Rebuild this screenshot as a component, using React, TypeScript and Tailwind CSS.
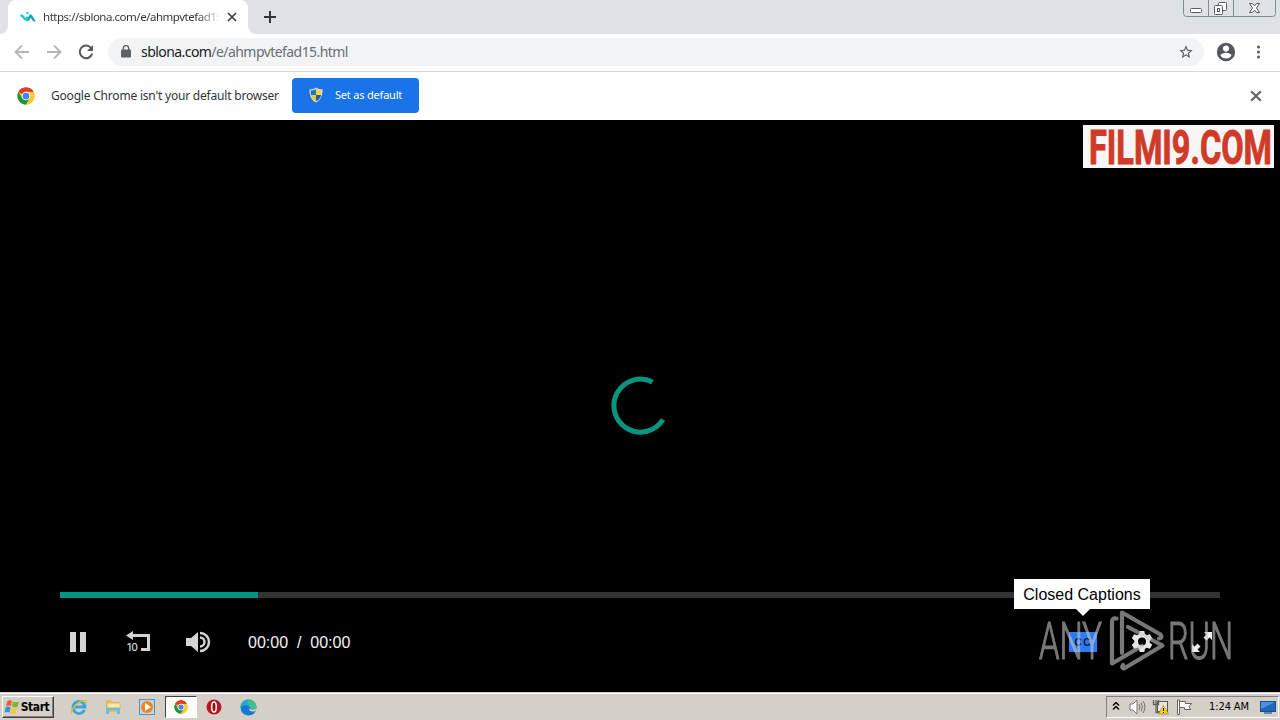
import React, { useState } from 'react'

function SiteIcon() {
  return (
    <svg width="16" height="12" viewBox="0 0 16 12" fill="none" strokeLinecap="round">
      <path d="M1.300 4.500C3.500 4.500 4 9 6.500 9 8 9 8 7.500 7 6.500" stroke="#1fc8d0" strokeWidth="2.400" />
      <path d="M8.500 8.500L10.500 4.500C12 4.500 12 8.500 14.300 9.500" stroke="#18a8a6" strokeWidth="2.400" />
      <circle cx="7.500" cy="2" r="1.200" fill="#22c7ce" />
    </svg>
  )
}

function ChromeLogo({ size }: { size: number }) {
  return (
    <svg width={size} height={size} viewBox="0 0 48 48">
      <circle cx="24" cy="24" r="23" fill="#fbc116" />
      <path d="M24 24L4.100 12.500A23 23 0 0 1 43.900 12.500H24Z" fill="#e33b2e" />
      <path d="M4.100 12.500A23 23 0 0 0 24 47L34 29.700 24 24 14 29.700Z" fill="#229342" />
      <path d="M24 12.500H43.900A23 23 0 0 1 24 47L34 29.700Z" fill="#fcc934" />
      <path d="M4.100 12.500A23 23 0 0 1 43.900 12.500H24A11.500 11.500 0 0 0 14 18.300Z" fill="#e33b2e" />
      <circle cx="24" cy="24" r="11.500" fill="#fff" />
      <circle cx="24" cy="24" r="9" fill="#4285f4" />
    </svg>
  )
}

function ShieldIcon() {
  return (
    <svg width="16" height="16" viewBox="0 0 16 16">
      <path d="M8 .5C10 2 12 2.300 14.500 2.300 14.800 8 13 13 8 15.500 3 13 1.200 8 1.500 2.300 4 2.300 6 2 8 .5Z" fill="#d9dfd5" />
      <path d="M8 2C6.500 3 5 3.400 2.800 3.500V8H8Z" fill="#2675c9" />
      <path d="M8 2C9.500 3 11 3.400 13.200 3.500V8H8Z" fill="#f8d537" />
      <path d="M2.800 8C3.400 11 5 13 8 14.300V8Z" fill="#f5c928" />
      <path d="M13.200 8C12.600 11 11 13 8 14.300V8Z" fill="#1d62b4" />
    </svg>
  )
}

function CloseIcon({ size, color }: { size: number; color: string }) {
  return (
    <svg width={size} height={size} viewBox="0 0 10 10">
      <path d="M1 1L9 9M9 1L1 9" stroke={color} strokeWidth="1.700" />
    </svg>
  )
}

function WindowButtons() {
  return (
    <svg width="94" height="18" viewBox="0 0 94 18" fill="none" className="absolute top-0 right-[3px]">
      <path d="M.5 0V13.500Q.5 16.500 3.500 16.500H89.500Q92.500 16.500 92.500 13.500V0M25.500 0V16M50.500 0V16" stroke="#868b93" />
      <rect x="7.500" y="8.500" width="11" height="4" rx="1" fill="#fff" stroke="#555a63" />
      <rect x="35.500" y="2.500" width="8" height="8" rx="1" fill="#fff" stroke="#555a63" />
      <rect x="31.500" y="5.500" width="8" height="9" rx="1" fill="#fff" stroke="#555a63" />
      <rect x="34.500" y="8.500" width="2" height="3" stroke="#555a63" />
      <path d="M66.500 3.500H69.500L71.500 6 73.500 3.500H76.500L73.500 8 76.500 12.500H73.500L71.500 10 69.500 12.500H66.500L69.500 8Z" fill="#fff" stroke="#555a63" />
    </svg>
  )
}

function TabStrip() {
  return (
    <div className="relative flex h-[34px] bg-[#dee1e6]">
      <div className="relative ml-2 flex w-[240px] items-center rounded-t-lg bg-white pl-3">
        <svg width="8" height="8" className="absolute bottom-0 -left-2"><path d="M8 0V8H0A8 8 0 0 0 8 0Z" fill="#fff" /></svg>
        <svg width="8" height="8" className="absolute -right-2 bottom-0"><path d="M0 0V8H8A8 8 0 0 1 0 0Z" fill="#fff" /></svg>
        <SiteIcon />
        <span className="ml-[7px] w-[175px] bg-gradient-to-r from-[#303338] from-88% to-[#30333833] bg-clip-text text-[11.5px] tracking-[-0.48px] whitespace-nowrap text-transparent">
          https://sblona.com/e/ahmpvtefad15
        </span>
        <button className="ml-[9px]"><CloseIcon size={10} color="#3c4043" /></button>
      </div>
      <button className="ml-[15px]">
        <svg width="14" height="14" viewBox="0 0 14 14"><path d="M7 1V13M1 7H13" stroke="#303338" strokeWidth="2" /></svg>
      </button>
      <WindowButtons />
    </div>
  )
}

function Toolbar() {
  return (
    <div className="flex h-[38px] items-center border-b border-[#d5d7db] bg-white pb-[2px] pl-[14px]">
      <svg width="16" height="16" viewBox="0 0 16 16" fill="none" stroke="#b4b6b9" strokeWidth="1.800">
        <path d="M15 8H2M8 1.500L1.500 8 8 14.500" />
      </svg>
      <svg className="ml-4" width="16" height="16" viewBox="0 0 16 16" fill="none" stroke="#b4b6b9" strokeWidth="1.800">
        <path d="M1 8H14M8 1.500L14.500 8 8 14.500" />
      </svg>
      <svg className="ml-4" width="16" height="16" viewBox="0 0 16 16">
        <path d="M13.300 4.300A6.300 6.300 0 1 0 14.200 9.600" fill="none" stroke="#55585d" strokeWidth="2" />
        <path d="M15 1V7H9Z" fill="#55585d" />
      </svg>
      <div className="ml-[14px] flex h-7 w-[1096px] items-center rounded-full bg-[#f1f3f4] px-[13px]">
        <svg width="10" height="13" viewBox="0 0 10 13">
          <rect x="0" y="4.500" width="10" height="8" rx="1" fill="#5f6368" />
          <path d="M2.300 5V3.300A2.700 2.700 0 0 1 7.700 3.300V5" fill="none" stroke="#5f6368" strokeWidth="1.400" />
        </svg>
        <span className="ml-[10px] text-[14px] tracking-[-0.56px] text-[#6b6f75]">
          <span className="text-[#202124]">sblona.com</span>/e/ahmpvtefad15.html
        </span>
        <svg className="-mr-[3px] ml-auto" width="16" height="16" viewBox="0 0 24 24" fill="#55585d">
          <path d="M22 9.240l-7.190-.62L12 2 9.190 8.630 2 9.240l5.460 4.730L5.820 21 12 17.270 18.180 21l-1.630-7.030L22 9.240zM12 15.400l-3.760 2.270 1-4.280-3.320-2.880 4.380-.38L12 6.100l1.710 4.040 4.380.38-3.320 2.880 1 4.280L12 15.400z" />
        </svg>
      </div>
      <svg className="ml-[11px]" width="22" height="22" viewBox="0 0 24 24" fill="#54575d">
        <path d="M12 2a10 10 0 1 0 0 20 10 10 0 0 0 0-20zm0 3a3.300 3.300 0 1 1 0 6.600A3.300 3.300 0 0 1 12 5zm0 14.200a7.200 7.200 0 0 1-6-3.200c0-2 4-3.100 6-3.100s6 1.100 6 3.100a7.200 7.200 0 0 1-6 3.200z" />
      </svg>
      <svg className="ml-[19px]" width="6" height="16" viewBox="0 0 6 16" fill="#55585d">
        <circle cx="2.500" cy="3" r="1.500" /><circle cx="2.500" cy="8" r="1.500" /><circle cx="2.500" cy="13" r="1.500" />
      </svg>
    </div>
  )
}

function InfoBar() {
  return (
    <div className="flex h-12 items-center bg-white pl-[17px]">
      <ChromeLogo size={18} />
      <span className="ml-4 w-[241px] text-[12px] tracking-[-0.2px] whitespace-nowrap text-[#303338]">
        Google Chrome isn't your default browser
      </span>
      <button className="mb-[2px] flex h-[35px] w-[127px] items-center rounded bg-[#1a73e8] pl-4 text-[11px] tracking-[-0.2px] whitespace-nowrap text-white">
        <ShieldIcon />
        <span className="ml-[11px]">Set as default</span>
      </button>
      <button className="mr-[18px] ml-auto"><CloseIcon size={12} color="#5f6368" /></button>
    </div>
  )
}

function AnyRunMark() {
  return (
    <svg width="200" height="64" viewBox="0 0 200 64" className="pointer-events-none absolute top-[489px] left-[1038px] opacity-60" fontFamily="Roboto, sans-serif" fill="#c8c8c8">
      <g fontSize="52" fontWeight="300" stroke="#c8c8c8" strokeWidth="1.200">
        <text x="1" y="50" textLength="63" lengthAdjust="spacingAndGlyphs">ANY</text>
        <text x="130" y="50" textLength="65" lengthAdjust="spacingAndGlyphs">RUN</text>
      </g>
      <g fill="none" stroke="#c8c8c8" strokeWidth="4.200" strokeLinejoin="round" strokeLinecap="round">
        <path d="M78.500 9.500Q74 8.500 74 13V54.500L104 37" />
        <path d="M84 44V3.500L122.500 25.500Q125 29 121 29.500" />
        <path d="M90 18L124.500 36.500 86 59.500Q83 58.500 85 56" />
      </g>
    </svg>
  )
}

function Player() {
  const [playing, setPlaying] = useState(true)

  return (
    <div className="relative flex h-[572px] flex-col bg-black">
      <div className="absolute top-[5px] left-[1083px] h-[43px] w-[191px] bg-[#f8f6f5]">
        <svg width="191" height="43" fontFamily="Roboto, sans-serif" fill="#d03a28" stroke="#d03a28" strokeWidth="1">
          <text x="6" y="38.500" fontSize="49" fontWeight="700" textLength="183" lengthAdjust="spacingAndGlyphs">FILMI9.COM</text>
        </svg>
      </div>
      <svg width="60" height="60" viewBox="0 0 60 60" className="mt-[256px] ml-[609px]">
        <path d="M43.500 6A26.500 26.500 0 1 0 54 43.500" fill="none" stroke="#0b9580" strokeWidth="5" />
      </svg>
      <div className="mx-[60px] mt-[156px] h-[6px] bg-[#333]">
        <div className="h-full w-[198px] bg-[#009681]" />
      </div>
      <div className="flex h-[88px] items-center pl-[70px]">
        <button onClick={() => setPlaying(!playing)}>
          <svg width="16" height="20" fill="#d4d4d4">
            {playing ? <path d="M0 0H6V20H0ZM10 0H16V20H10Z" /> : <path d="M0 0L16 10L0 20Z" />}
          </svg>
        </button>
        <svg className="ml-10" width="24" height="23" viewBox="0 0 24 23" fill="#d4d4d4">
          <path d="M0 4.500L7 0V3H24V20H15V17H21V6H7V9Z" />
          <text x="1" y="20" fontSize="11" fontWeight="500" fontFamily="Inter, sans-serif" textLength="11" lengthAdjust="spacingAndGlyphs">10</text>
        </svg>
        <svg className="ml-9" width="25" height="22" viewBox="0 0 25 22" fill="#d4d4d4">
          <path d="M0 7H5L12 1V21L5 15H0Z" />
          <path d="M14 2A9 9 0 0 1 14 20M14 6.500A4.500 4.500 0 0 1 14 15.500" fill="none" stroke="#d4d4d4" strokeWidth="2.500" />
        </svg>
        <span className="mt-[2px] ml-[37px] font-['Liberation_Sans',sans-serif] text-[16px] whitespace-pre text-[#f4f4f4]">00:00  /  00:00</span>
        <div className="mr-[68px] ml-auto flex items-center">
          <svg width="28" height="20" viewBox="0 0 28 20">
            <rect width="28" height="20" fill="#2b7cf4" />
            <text x="5.500" y="13.500" fontSize="10" fontWeight="700" fontFamily="Liberation Sans, sans-serif" fill="#061633" textLength="16">CC</text>
          </svg>
          <svg className="ml-[33px]" width="24" height="24" viewBox="0 0 24 24" fill="#e7e7e7">
            <path d="M9.700 1h4.600l.7 3.300 1.700 1 3.200-1 2.300 4-2.500 2.200v2l2.500 2.200-2.300 4-3.200-1-1.700 1-.7 3.300H9.700L9 18.700l-1.700-1-3.200 1-2.300-4 2.500-2.200v-2L1.800 8.300l2.300-4 3.200 1 1.700-1ZM12 7.500a4 4 0 1 0 0 8 4 4 0 0 0 0-8Z" fillRule="evenodd" />
          </svg>
          <svg className="ml-[38px]" width="20" height="20" viewBox="0 0 20 20" fill="#efefef">
            <path d="M12 0H20V8L17.500 5.500 14.500 8.500 11.500 5.500 14.500 2.500ZM0 12L2.500 14.500 5.500 11.500 8.500 14.500 5.500 17.500 8 20H0Z" />
          </svg>
        </div>
      </div>
      <div className="absolute top-[459px] left-[1014px] flex h-[30px] w-[136px] items-center justify-center bg-white pt-[2px] font-['Liberation_Sans',sans-serif] text-[16px] whitespace-nowrap text-black">
        Closed Captions
        <div className="absolute -bottom-[7px] left-[61px] border-x-8 border-t-8 border-x-transparent border-t-white" />
      </div>
      <AnyRunMark />
    </div>
  )
}

function StartButton() {
  return (
    <button className="flex h-[22px] w-[52px] items-center border border-[#fff] border-r-[#404040] border-b-[#404040] bg-[#d4d0c8] pl-px text-black shadow-[inset_-1px_-1px_0_#808080]">
      <svg width="16" height="16" viewBox="0 0 16 16">
        <path d="M3.500 2Q6 .5 8 2L7 7Q4.500 6 2 7Z" fill="#e8612c" />
        <path d="M9 2.500Q12 4 15 2.500L13.500 8Q11 9 8 7.500Z" fill="#79b63b" />
        <path d="M1.700 8Q4 7 6.800 8.200L5.500 13.500Q3 12.500 .5 13.500Z" fill="#3f8ed5" />
        <path d="M7.800 8.700Q10.500 10 13.200 9L12 14Q9 15.500 6.500 14Z" fill="#f8c839" />
      </svg>
      <span className="w-[30px] font-['DejaVu_Sans_Condensed','DejaVu_Sans',sans-serif] text-[12px] font-bold tracking-[-0.4px]">Start</span>
    </button>
  )
}

function Taskbar() {
  return (
    <div className="flex h-7 items-center border-t border-[#d4d0c8] bg-[#d4d0c8] pt-px pl-[2px] shadow-[inset_0_1px_0_#fff]">
      <StartButton />
      {/* Internet Explorer */}
      <svg className="ml-4" width="18" height="18" viewBox="0 0 18 18" fill="none">
        <path d="M14.500 12A6 6 0 1 1 15 9H5" stroke="#3ba5df" strokeWidth="2.800" />
        <path d="M2 15.500C-1 13 8 2 15.500 2.500 17 3 16.500 5 15.500 6" stroke="#e4b633" strokeWidth="1.400" />
      </svg>
      {/* Explorer */}
      <svg className="ml-4" width="18" height="18" viewBox="0 0 18 18">
        <path d="M2 2H7L8 4H15V14H2Z" fill="#e6bd57" />
        <path d="M3 5H16V12H3Z" fill="#fae99f" stroke="#d0aa4e" strokeWidth=".7" />
        <path d="M2 16V11Q2 9.500 4 9.500H14Q16 9.500 16 11V16H13V12H5V16Z" fill="#70b9df" />
      </svg>
      {/* Media Player */}
      <svg className="ml-[17px]" width="16" height="16" viewBox="0 0 16 16">
        <rect x=".5" y=".5" width="15" height="15" fill="#b8d8ef" stroke="#6190b5" />
        <circle cx="8" cy="8" r="6" fill="#ee8519" />
        <path d="M6 4L12 8 6 12Z" fill="#fff" />
      </svg>
      <div className="ml-[10px] flex h-[22px] w-[32px] items-center justify-center border border-[#404040] border-r-white border-b-white bg-[#fcfcfb]">
        <ChromeLogo size={14} />
      </div>
      {/* Opera */}
      <svg className="ml-[9px]" width="16" height="16" viewBox="0 0 16 16">
        <circle cx="8" cy="8" r="7.500" fill="#b91620" />
        <ellipse cx="8" cy="8" rx="2.300" ry="5" fill="#941018" stroke="#fff" strokeWidth="1.500" />
      </svg>
      {/* Edge */}
      <svg className="ml-[18px]" width="17" height="17" viewBox="0 0 17 17">
        <circle cx="8.500" cy="8.500" r="8" fill="#157bd0" />
        <path d="M.5 8C1 3 4 .5 8.500 .5 13 .5 16.500 4 16.500 7.500 16.500 10 14 11.500 10.500 10.500 11 7 8 5.500 5.500 6 3 6 1.500 7 .5 8Z" fill="#42bf8e" />
        <path d="M.5 8C1 4 4 1 8 1 5 3 11 5 10 9 7 4 3 5 .5 8Z" fill="#20a8df" />
        <path d="M9 9.500C9 12 12 13.500 15.500 12L16.500 9Q13 12 9 9.500Z" fill="#d4d0c8" />
      </svg>
      <div className="ml-auto flex h-[22px] w-[173px] items-center border border-[#808080] border-r-white border-b-white pl-[5px]">
        <svg width="8" height="10" viewBox="0 0 8 10" fill="none" stroke="#000" strokeWidth="1.400">
          <path d="M1 3.500L4 .5 7 3.500M1 7.500L4 4.500 7 7.500" />
        </svg>
        <svg className="ml-[9px]" width="17" height="16" viewBox="0 0 17 16" fill="none" stroke="#75736e">
          <path d="M1 5H4L8 1V15L4 11H1Z" fill="#fff" />
          <path d="M10 5Q12 8 10 11M12 3.500Q15 8 12 12.500M14 2Q18 8 14 14" />
        </svg>
        <svg className="ml-[6px]" width="17" height="16" viewBox="0 0 17 16">
          <rect x="5.500" y="2.500" width="10" height="10" fill="#e5e4df" stroke="#5a5853" />
          <path d="M1.500 1V5.500H6.500V1M4 1V13.500H8" fill="none" stroke="#65635e" strokeWidth="1.300" />
          <path d="M11.500 6.500L16.500 15H6.500Z" fill="#f9d52e" stroke="#b08c12" strokeWidth=".8" />
          <path d="M11.500 9V12M11.500 13V14" stroke="#000" />
        </svg>
        <svg className="ml-[7px]" width="17" height="16" viewBox="0 0 17 16" fill="#fff" stroke="#65635e">
          <path d="M1.500 1V15.500H3.500V1Z" />
          <path d="M3.500 2.500H9.500V4.500H15.500L13 7.500 14.500 10.500H8.500V8.500H3.500Z" />
        </svg>
        <span className="ml-4 w-[42px] font-['DejaVu_Sans_Condensed','DejaVu_Sans',sans-serif] text-[11px] tracking-[-0.1px] whitespace-nowrap text-black">1:24 AM</span>
        <svg className="ml-[9px]" width="17" height="15" viewBox="0 0 17 15">
          <rect x=".5" y="1.500" width="15" height="10" fill="#2168bd" stroke="#1e4d85" />
          <path d="M1 2H15L1 9Z" fill="#4b93dd" />
          <path d="M4 13H12" stroke="#6f879e" strokeWidth="2" />
        </svg>
      </div>
      <div className="w-px" />
    </div>
  )
}

export default function App() {
  return (
    <div className="h-[720px] w-[1280px] overflow-hidden bg-black font-['Noto_Sans',sans-serif]">
      <TabStrip />
      <Toolbar />
      <InfoBar />
      <Player />
      <Taskbar />
    </div>
  )
}
